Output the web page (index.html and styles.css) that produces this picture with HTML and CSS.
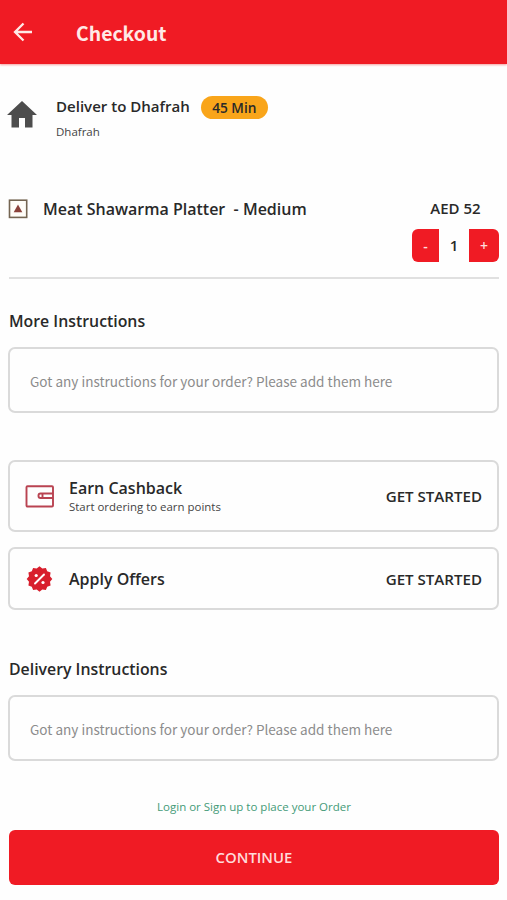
FILE: index.html
```html
<!DOCTYPE html>
<html lang="en">
<head>
<meta charset="utf-8">
<title>Checkout</title>
<link rel="stylesheet" href="styles.css">
</head>
<body>
<header class="topbar">
  <svg class="back" viewBox="0 0 20 20" width="20" height="20"><path d="M19 10H2M10.500 1.500L2 10l8.500 8.500" fill="none" stroke="currentColor" stroke-width="2.300"/></svg>
  <h1>Checkout</h1>
</header>
<main>
  <section class="address">
    <svg class="home" viewBox="0 0 30 27" width="30" height="27"><path d="M15 0L30 14H25.500V26.500H18V17H12V26.500H4.500V14H0Z" fill="#4d4d4d"/></svg>
    <div>
      <div class="deliver"><span class="title">Deliver to Dhafrah</span><span class="time">45 Min</span></div>
      <p class="area">Dhafrah</p>
    </div>
  </section>
  <section class="item">
    <svg class="mark" viewBox="0 0 20 20" width="20" height="20"><rect x="1.500" y="1.200" width="17.200" height="17.200" fill="#fffdf8" stroke="#746552" stroke-width="1.600"/><path d="M10 5.500L14.300 13.300H5.700Z" fill="#8b423b"/></svg>
    <span class="name">Meat Shawarma Platter&nbsp; - Medium</span>
    <div class="order">
      <span class="price">AED 52</span>
      <div class="stepper"><button class="minus">-</button><span class="count">1</span><button class="plus">+</button></div>
    </div>
  </section>
  <section class="notes">
    <h2>More Instructions</h2>
    <div class="field">Got any instructions for your order? Please add them here</div>
  </section>
  <section class="cards">
    <div class="card cashback">
      <svg class="icon" viewBox="0 0 30 24" width="30" height="24" fill="none" stroke="#b94351" stroke-width="1.900"><rect x="1.500" y="2.200" width="26.500" height="20.300" rx="1"/><path d="M28 9.500H15.500a2 2 0 0 0-2 2v.500a2 2 0 0 0 2 2H28M17.500 9.500V14"/></svg>
      <div class="label"><strong>Earn Cashback</strong><small>Start ordering to earn points</small></div>
      <span class="action">GET STARTED</span>
    </div>
    <div class="card offers">
      <svg class="icon" viewBox="-14.500 -13 30 26" width="30" height="26"><path d="M0-12.800L2.800-10.500L6.400-11.100L7.700-7.700L11.100-6.400L10.500-2.800L12.800 0L10.500 2.800L11.100 6.400L7.700 7.700L6.400 11.100L2.800 10.500L0 12.800L-2.800 10.500L-6.400 11.100L-7.700 7.700L-11.100 6.400L-10.500 2.800L-12.800 0L-10.500-2.800L-11.100-6.400L-7.700-7.700L-6.400-11.100L-2.800-10.500Z" fill="#d81f2d"/><path d="M4.500-4.500L-4.500 4.500" stroke="#fff" stroke-width="1.900" stroke-linecap="round"/><circle cx="-3.300" cy="-3.500" r="1.600" fill="#fff"/><circle cx="3.500" cy="3.500" r="1.600" fill="#fff"/></svg>
      <div class="label"><strong>Apply Offers</strong></div>
      <span class="action">GET STARTED</span>
    </div>
  </section>
  <section class="notes delivery">
    <h2>Delivery Instructions</h2>
    <div class="field">Got any instructions for your order? Please add them here</div>
  </section>
</main>
<footer>
  <p class="login">Login or Sign up to place your Order</p>
  <button class="continue">CONTINUE</button>
</footer>
</body>
</html>
```
FILE: styles.css
```css
* { box-sizing: border-box; margin: 0; padding: 0; }
body { width: 507px; height: 900px; overflow: hidden; background: #fefefe; color: #292929; font-family: "Open Sans", sans-serif; font-size: 15px; font-weight: 600; white-space: nowrap; }
button { border: 0; font: inherit; }
.topbar { display: flex; align-items: center; height: 64px; padding-left: 13px; background: #f01b24; color: #ffe9e6; box-shadow: 0 1px 2px #f5a0a0; }
h1 { margin: 0 0 0 43px; font: 700 19.400px/31px "Noto Sans CJK SC", sans-serif; }
main { padding: 0 8px; }
.address { display: flex; height: 127px; padding-top: 31px; }
.home { flex: none; margin: 6px 19px 0 -1px; }
.deliver { display: flex; align-items: center; height: 24px; }
.title { margin-top: -2px; font-size: 15.050px; }
.time { width: 67px; height: 23px; margin-left: 11px; border-radius: 12px; background: #f9a51a; text-align: center; font-size: 13.700px; line-height: 24px; }
.area { margin-top: 4px; font-size: 11.500px; line-height: 17px; font-weight: 400; color: #444; }
.item { display: flex; height: 88px; padding-top: 8px; border-bottom: 2px solid #e0e0e0; margin: 0 0 0 1px; }
.mark { flex: none; margin: 0 15px 0 -1px; }
.name { font-size: 16px; line-height: 20px; }
.order { width: 87px; margin-left: auto; }
.price { display: block; margin-top: -1px; text-align: center; line-height: 20px; }
.stepper { display: flex; height: 33px; margin-top: 11px; }
.stepper button { width: 27px; background: #f01b24; color: #ffdcdc; font-size: 14px; }
.stepper .minus { border-radius: 6px 0 0 6px; }
.stepper .plus { width: 30px; border-radius: 0 6px 6px 0; }
.count { flex: 1; text-align: center; line-height: 33px; }
.notes { padding-top: 31px; }
h2 { padding-left: 1px; font-size: 15.850px; line-height: 22px; font-weight: 600; }
.field { display: flex; align-items: center; height: 66px; margin-top: 15px; padding: 1px 0 0 20px; border: 2px solid #dadada; border-radius: 7px; color: #8c8c8c; font: 400 13.550px "Noto Sans CJK SC", sans-serif; }
.cards { display: grid; gap: 15px; margin-top: 47px; }
.card { display: flex; align-items: center; height: 72px; padding: 0 15px; border: 2px solid #dadada; border-radius: 7px; }
.offers { height: 63px; }
.icon { flex: none; margin-right: 14px; }
.label { display: grid; }
.cashback .label { padding-top: 2px; }
.label strong { font-size: 16px; line-height: 20px; font-weight: 600; }
.label small { font-size: 11.450px; line-height: 18px; font-weight: 400; color: #444; }
.action { margin-left: auto; font-size: 15.100px; }
.delivery { padding-top: 48px; }
footer { padding: 36px 8px 0 9px; }
.login { text-align: center; font-size: 11.500px; line-height: 20px; font-weight: 400; color: #449b78; }
.continue { display: block; width: 490px; height: 55px; margin-top: 13px; padding-bottom: 2px; border-radius: 6px; background: #f01b24; color: #ffdada; font-size: 14.900px; }
```
